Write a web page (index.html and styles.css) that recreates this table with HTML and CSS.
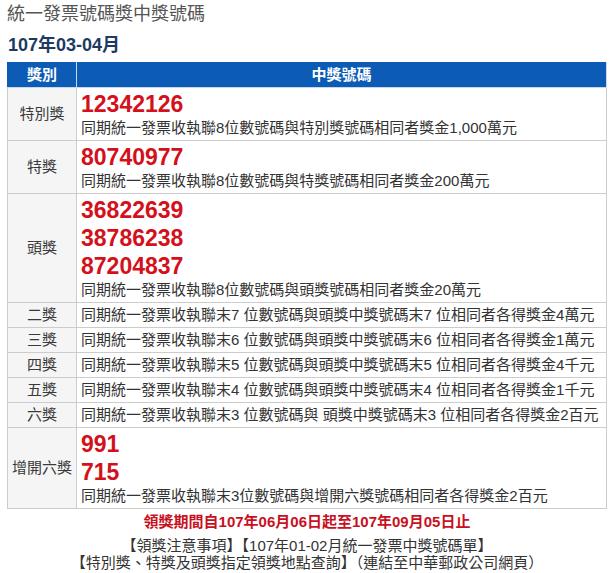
FILE: index.html
```html
<!DOCTYPE html>
<html lang="zh-Hant">
<head>
<meta charset="utf-8">
<link rel="stylesheet" href="styles.css">
</head>
<body>
<div class="page">
  <h1 class="title">統一發票號碼獎中獎號碼</h1>
  <h2 class="period">107年03-04月</h2>
  <table class="prizes">
    <thead>
      <tr><th class="c1">獎別</th><th>中獎號碼</th></tr>
    </thead>
    <tbody>
      <tr>
        <td class="label">特別獎</td>
        <td class="info"><div class="num">12342126</div><div class="desc">同期統一發票收執聯8位數號碼與特別獎號碼相同者獎金1,000萬元</div></td>
      </tr>
      <tr>
        <td class="label">特獎</td>
        <td class="info"><div class="num">80740977</div><div class="desc">同期統一發票收執聯8位數號碼與特獎號碼相同者獎金200萬元</div></td>
      </tr>
      <tr>
        <td class="label">頭獎</td>
        <td class="info"><div class="num">36822639</div><div class="num">38786238</div><div class="num">87204837</div><div class="desc">同期統一發票收執聯8位數號碼與頭獎號碼相同者獎金20萬元</div></td>
      </tr>
      <tr>
        <td class="label">二獎</td>
        <td class="info"><div class="desc">同期統一發票收執聯末7 位數號碼與頭獎中獎號碼末7 位相同者各得獎金4萬元</div></td>
      </tr>
      <tr>
        <td class="label">三獎</td>
        <td class="info"><div class="desc">同期統一發票收執聯末6 位數號碼與頭獎中獎號碼末6 位相同者各得獎金1萬元</div></td>
      </tr>
      <tr>
        <td class="label">四獎</td>
        <td class="info"><div class="desc">同期統一發票收執聯末5 位數號碼與頭獎中獎號碼末5 位相同者各得獎金4千元</div></td>
      </tr>
      <tr>
        <td class="label">五獎</td>
        <td class="info"><div class="desc">同期統一發票收執聯末4 位數號碼與頭獎中獎號碼末4 位相同者各得獎金1千元</div></td>
      </tr>
      <tr>
        <td class="label">六獎</td>
        <td class="info"><div class="desc">同期統一發票收執聯末3 位數號碼與 頭獎中獎號碼末3 位相同者各得獎金2百元</div></td>
      </tr>
      <tr>
        <td class="label">增開六獎</td>
        <td class="info"><div class="num">991</div><div class="num">715</div><div class="desc">同期統一發票收執聯末3位數號碼與增開六獎號碼相同者各得獎金2百元</div></td>
      </tr>
    </tbody>
  </table>
  <p class="deadline">領獎期間自107年06月06日起至107年09月05日止</p>
  <p class="links">【領獎注意事項】【107年01-02月統一發票中獎號碼單】<br>【特別獎、特獎及頭獎指定領獎地點查詢】（連結至中華郵政公司網頁）</p>
</div>
</body>
</html>
```

FILE: styles.css
```css
html, body {
  margin: 0;
  padding: 0;
  background: #ffffff;
}

body {
  font-family: "Liberation Sans", "Noto Sans CJK TC", sans-serif;
  color: #333333;
}

.page {
  padding: 2px 8px 0 7px;
  width: 600px;
}

.title {
  margin: 0;
  font-size: 18px;
  line-height: 24px;
  font-weight: normal;
  color: #555555;
}

.period {
  margin: 7px 0 0 1px;
  font-size: 18px;
  line-height: 24px;
  font-weight: bold;
  color: #1d3a62;
}

.prizes {
  margin-top: 5px;
  width: 600px;
  border-collapse: collapse;
  font-size: 15px;
}

.prizes th {
  background: #0c5bb4;
  color: #ffffff;
  font-weight: bold;
  font-size: 15px;
  line-height: 24px;
  padding: 0;
  text-align: center;
  border: 1px solid #c9d8ec;
  border-top-color: #0c5bb4;
}

.prizes th.c1 {
  width: 67px;
  border-left-color: #0c5bb4;
}

.prizes td {
  border: 1px solid #cccccc;
  padding: 2px 4px;
  vertical-align: middle;
}

.label {
  background: #f5f5f5;
  text-align: center;
  white-space: nowrap;
  line-height: 20px;
  color: #3a3a3a;
}

.info {
  background: #ffffff;
}

.num {
  color: #d4101b;
  font-weight: bold;
  font-size: 23px;
  line-height: 28px;
  font-family: "Liberation Sans", Arial, sans-serif;
}

.desc {
  line-height: 20px;
  white-space: nowrap;
  color: #333333;
}

.deadline {
  margin: 2px 0 0;
  text-align: center;
  color: #c8101e;
  font-weight: bold;
  font-size: 15px;
  line-height: 22px;
}

.links {
  margin: 4px 0 0;
  text-align: center;
  font-size: 15px;
  line-height: 17px;
  color: #333333;
}
```
